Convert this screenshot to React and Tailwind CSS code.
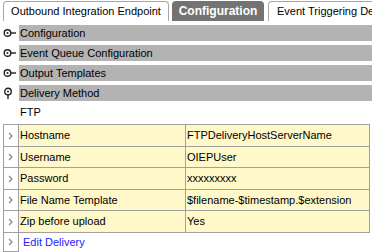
const sections = [
  { title: 'Configuration', open: false },
  { title: 'Event Queue Configuration', open: false },
  { title: 'Output Templates', open: false },
  { title: 'Delivery Method', open: true },
];

const rows = [
  { label: 'Hostname', value: 'FTPDeliveryHostServerName', h: 'h-[22px]' },
  { label: 'Username', value: 'OIEPUser', h: 'h-[21px]' },
  { label: 'Password', value: 'xxxxxxxxx', h: 'h-[22px]' },
  { label: 'File Name Template', value: '$filename-$timestamp.$extension', h: 'h-[21px]' },
  { label: 'Zip before upload', value: 'Yes', h: 'h-[22px]' },
];

const ToggleIcon = ({ open }) =>
  open ? (
    <svg width="10" height="13" viewBox="0 0 10 13">
      <circle cx="5" cy="4.5" r="3.3" fill="none" stroke="#222" strokeWidth="1.4" />
      <circle cx="5" cy="4.5" r="1" fill="#222" />
      <path d="M5 8v4" stroke="#222" strokeWidth="1.4" />
    </svg>
  ) : (
    <svg width="14" height="10" viewBox="0 0 14 10">
      <circle cx="4.5" cy="5" r="3.3" fill="none" stroke="#222" strokeWidth="1.4" />
      <circle cx="4.5" cy="5" r="1" fill="#222" />
      <path d="M8 5h5" stroke="#222" strokeWidth="1.4" />
    </svg>
  );

const Chevron = () => (
  <svg width="6" height="8" viewBox="0 0 6 8">
    <path d="M1 1l3 3-3 3" fill="none" stroke="#8a8a8a" strokeWidth="1.3" />
  </svg>
);

export default function App() {
  return (
    <div className="w-[372px] h-[252px] bg-white overflow-hidden font-['Liberation_Sans',Arial,sans-serif] text-[11px] text-black">
      <div className="flex items-end h-[21px] pt-[1px]">
        <div className="ml-[3px] w-[166px] h-[20px] flex items-center justify-center bg-white border border-b-0 border-[#a6a6a6] rounded-t-[4px] text-[11px]">
          Outbound Integration Endpoint
        </div>
        <div className="ml-[3px] w-[92px] h-[20px] flex items-center justify-center bg-[#737373] rounded-t-[4px] text-white font-bold text-[12px]">
          Configuration
        </div>
        <div className="ml-[4px] flex-1 h-[20px] flex items-center pl-[8px] whitespace-nowrap overflow-hidden bg-white border border-b-0 border-r-0 border-[#a6a6a6] rounded-tl-[4px]">
          Event Triggering Delivery
        </div>
      </div>

      <div className="mt-[4px] flex flex-col gap-[4px]">
        {sections.map((s) => (
          <div key={s.title} className="flex items-center h-[16px]">
            <div className="w-[19px] flex justify-start pl-[3px]">
              <ToggleIcon open={s.open} />
            </div>
            <div className="flex-1 h-full bg-[#b3b3b3] flex items-center pl-[1px]">{s.title}</div>
          </div>
        ))}
      </div>

      <div className="h-[23px] flex items-center pl-[20px]">FTP</div>

      <table className="ml-[3px] w-[367px] border-collapse table-fixed">
        <colgroup>
          <col className="w-[15px]" />
          <col className="w-[167px]" />
          <col />
        </colgroup>
        <tbody>
          {rows.map((r) => (
            <tr key={r.label} className={r.h}>
              <td className="border border-[#a0a0a0] p-0">
                <div className="flex justify-center">
                  <Chevron />
                </div>
              </td>
              <td className="border border-[#a0a0a0] bg-[#fff8c8] p-0 pl-[1px] whitespace-nowrap">{r.label}</td>
              <td className="border border-[#a0a0a0] bg-[#fff8c8] p-0 pl-[1px] whitespace-nowrap">{r.value}</td>
            </tr>
          ))}
          <tr className="h-[19px]">
            <td className="border border-[#a0a0a0] p-0">
              <div className="flex justify-center">
                <Chevron />
              </div>
            </td>
            <td className="p-0 pl-[4px] text-[#1a1aff]" colSpan={2}>
              Edit Delivery
            </td>
          </tr>
        </tbody>
      </table>
    </div>
  );
}
